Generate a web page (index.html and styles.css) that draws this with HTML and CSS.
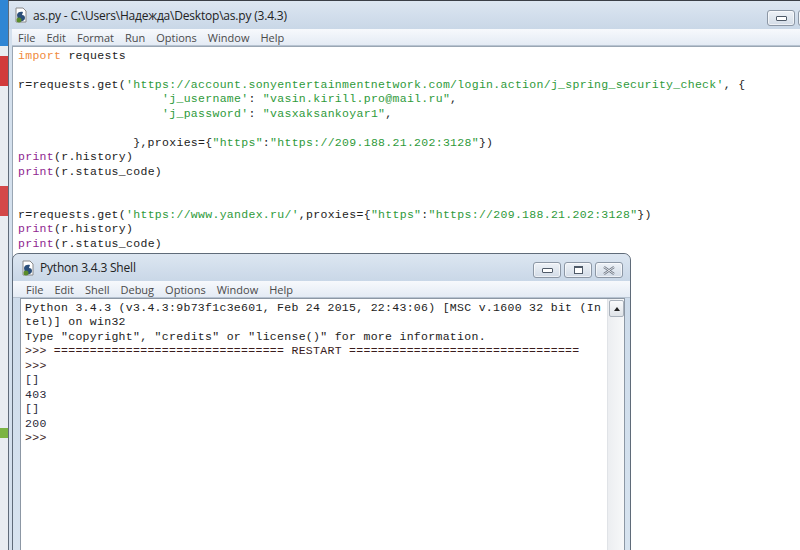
FILE: index.html
```html
<!DOCTYPE html>
<html lang="ru">
<head>
  <meta charset="UTF-8">
  <title>as.py - IDLE</title>
  <link rel="stylesheet" href="styles.css">
</head>
<body>
  <div class="desktop">
    <!-- bits of other windows peeking out on the left -->
    <div class="peek peek-blue"></div>
    <div class="peek peek-red1"></div>
    <div class="peek peek-red2"></div>
    <div class="peek peek-green"></div>

    <!-- editor window -->
    <div class="window editor">
      <div class="titlebar">
        <svg class="app-icon" width="16" height="16" viewBox="0 0 16 16">
          <path d="M3 1h7l3 3v11H3z" fill="#fff" stroke="#8a8a8a"/>
          <path d="M4 8c0-3 4-4 6-3l-1 3c2 0 3 1 3 3 0 3-4 4-7 3z" fill="#2b4f7a"/>
          <circle cx="6" cy="13" r="2.5" fill="#5b8c2a"/>
        </svg>
        <span class="title">as.py - C:\Users\Надежда\Desktop\as.py (3.4.3)</span>
        <div class="caption-btns">
          <span class="cbtn"><i class="min"></i></span>
          <span class="cbtn cut"></span>
        </div>
      </div>
      <div class="menubar">
        <span>File</span><span>Edit</span><span>Format</span><span>Run</span><span>Options</span><span>Window</span><span>Help</span>
      </div>
      <pre class="code"><span class="kw">import</span> requests

r=requests.get(<span class="str">'https://account.sonyentertainmentnetwork.com/login.action/j_spring_security_check'</span>, {
                    <span class="str">'j_username'</span>: <span class="str">"vasin.kirill.pro@mail.ru"</span>,
                    <span class="str">'j_password'</span>: <span class="str">"vasxaksankoyar1"</span>,

                },proxies={<span class="str">"https"</span>:<span class="str">"https://209.188.21.202:3128"</span>})
<span class="bi">print</span>(r.history)
<span class="bi">print</span>(r.status_code)


r=requests.get(<span class="str">'https://www.yandex.ru/'</span>,proxies={<span class="str">"https"</span>:<span class="str">"https://209.188.21.202:3128"</span>})
<span class="bi">print</span>(r.history)
<span class="bi">print</span>(r.status_code)</pre>
    </div>

    <!-- shell window -->
    <div class="window shell">
      <div class="titlebar">
        <svg class="app-icon" width="16" height="16" viewBox="0 0 16 16">
          <path d="M3 1h7l3 3v11H3z" fill="#fff" stroke="#8a8a8a"/>
          <path d="M4 8c0-3 4-4 6-3l-1 3c2 0 3 1 3 3 0 3-4 4-7 3z" fill="#2b4f7a"/>
          <circle cx="6" cy="13" r="2.5" fill="#5b8c2a"/>
        </svg>
        <span class="title">Python 3.4.3 Shell</span>
        <div class="caption-btns">
          <span class="cbtn"><i class="min"></i></span>
          <span class="cbtn"><i class="max"></i></span>
          <span class="cbtn close">
            <svg width="12" height="9" viewBox="0 0 12 9"><path d="M1 1l10 7M11 1L1 8" stroke="#6d7684" stroke-width="2.2" fill="none"/><path d="M1 1l10 7M11 1L1 8" stroke="#fff" stroke-width="0.8" fill="none"/></svg>
          </span>
        </div>
      </div>
      <div class="menubar">
        <span>File</span><span>Edit</span><span>Shell</span><span>Debug</span><span>Options</span><span>Window</span><span>Help</span>
      </div>
      <div class="shell-body">
        <pre class="console">Python 3.4.3 (v3.4.3:9b73f1c3e601, Feb 24 2015, 22:43:06) [MSC v.1600 32 bit (In
tel)] on win32
Type "copyright", "credits" or "license()" for more information.
<span class="prompt">&gt;&gt;&gt; ================================ RESTART ================================</span>
<span class="prompt">&gt;&gt;&gt;</span>
<span class="out">[]</span>
<span class="out">403</span>
<span class="out">[]</span>
<span class="out">200</span>
<span class="prompt">&gt;&gt;&gt;</span> </pre>
        <div class="scrollbar">
          <div class="sb-up"><i></i></div>
        </div>
      </div>
    </div>
  </div>
</body>
</html>
```

FILE: styles.css
```css
html, body {
  margin: 0;
  padding: 0;
  width: 100%;
  height: 100%;
  overflow: hidden;
  background: #fff;
}
.desktop {
  position: relative;
  width: 800px;
  height: 550px;
  background: #e9edf1;
  overflow: hidden;
  font-family: "Open Sans", "DejaVu Sans", sans-serif;
}
.peek {
  position: absolute;
  left: 0;
  width: 8px;
}
.peek-blue { top: 0; height: 46px; background: #2f86d4; }
.peek-red1 { top: 56px; height: 30px; background: #d13b3b; }
.peek-red2 { top: 186px; height: 30px; background: #d34848; }
.peek-green { top: 428px; height: 10px; background: #7bb443; }

.window {
  position: absolute;
  display: flex;
  flex-direction: column;
  border: 1px solid #5f6b79;
  background: #d4e0ed;
  box-sizing: border-box;
}
.editor {
  left: 8px;
  top: 0;
  width: 830px;
  height: 570px;
  border-top-color: #3a3f46;
  padding: 0 0 0 3px;
}
.shell {
  left: 12px;
  top: 253px;
  width: 619px;
  height: 320px;
  border-radius: 7px 7px 0 0;
  padding: 0 5px 0 7px;
  background: linear-gradient(#dbe6f1, #cddbea 40px, #d8e4f0);
}
.titlebar {
  display: flex;
  align-items: center;
  flex-shrink: 0;
  height: 27px;
  background: linear-gradient(#dce6f1, #c9d7e7);
}
.editor .titlebar {
  height: 28px;
  margin-left: -3px;
  padding-left: 3px;
}
.shell .titlebar {
  margin: 0 -5px 0 -7px;
  padding-left: 7px;
  border-radius: 7px 7px 0 0;
}
.app-icon {
  margin-left: 1px;
  margin-right: 4px;
  flex-shrink: 0;
}
.shell .app-icon {
  margin-left: 0;
}
.title {
  font-size: 12px;
  color: #222;
  white-space: nowrap;
  letter-spacing: -0.2px;
}
.caption-btns {
  margin-left: auto;
  display: flex;
  gap: 3px;
  align-self: flex-start;
  margin-top: 8px;
}
.editor .caption-btns {
  margin-top: 9px;
  margin-right: -2px;
  width: 72px;
}
.shell .caption-btns {
  margin-right: 7px;
}
.cbtn {
  width: 26px;
  height: 14px;
  border: 1px solid #8c97a5;
  border-radius: 3px;
  background: linear-gradient(#eef2f7, #d3dce7);
  display: flex;
  align-items: center;
  justify-content: center;
  box-shadow: inset 0 0 0 1px rgba(255, 255, 255, 0.6);
}
.cbtn.cut {
  width: 20px;
}
.min {
  display: block;
  width: 9px;
  height: 3px;
  margin-top: 1px;
  border: 1px solid #4f5a68;
  background: #fff;
  border-radius: 1px;
}
.max {
  display: block;
  width: 7px;
  height: 5px;
  border: 1px solid #4f5a68;
  border-top-width: 2px;
  background: #fff;
}
.menubar {
  display: flex;
  flex-shrink: 0;
  height: 16px;
  align-items: center;
  background: linear-gradient(#f7f9fc, #e4ebf4);
  border-bottom: 1px solid #b7c3d1;
  font-size: 11px;
  color: #4a4a4a;
  padding-left: 6px;
}
.editor .menubar {
  padding-left: 6px;
}
.shell .menubar {
  margin: 0 -5px 0 -7px;
  padding-left: 13px;
}
.menubar span {
  margin-right: 11px;
  white-space: nowrap;
}
.code, .console {
  margin: 0;
  font-family: "Liberation Mono", "Courier New", monospace;
  font-size: 11.5px;
  letter-spacing: 0.3px;
  line-height: 14.45px;
  color: #222;
  white-space: pre;
}
.code {
  flex: 1;
  background: #fff;
  padding: 2px 0 0 5px;
  border-top: 1px solid #9aa6b3;
  border-left: 1px solid #9aa6b3;
}
.kw { color: #f08a3c; }
.bi { color: #8f268f; }
.str { color: #2e9a3a; }
.shell-body {
  flex: 1;
  display: flex;
  border: 1px solid #8c97a4;
  border-bottom: none;
  background: #fff;
}
.console {
  flex: 1;
  overflow: hidden;
  padding: 2px 0 0 4px;
}
.prompt { color: #3a1c1c; }
.out { color: #2a2a3a; }
.scrollbar {
  width: 16px;
  flex-shrink: 0;
  background: linear-gradient(90deg, #eceef1, #f7f8f9);
  border-left: 1px solid #e0e3e7;
}
.sb-up {
  height: 15px;
  margin: 1px 0 0 1px;
  border: 1px solid #a9b1bb;
  border-radius: 2px;
  background: linear-gradient(#fafbfc, #dfe3e8);
  display: flex;
  align-items: center;
  justify-content: center;
}
.sb-up i {
  width: 0;
  height: 0;
  border-left: 3px solid transparent;
  border-right: 3px solid transparent;
  border-bottom: 4px solid #222;
}
```
